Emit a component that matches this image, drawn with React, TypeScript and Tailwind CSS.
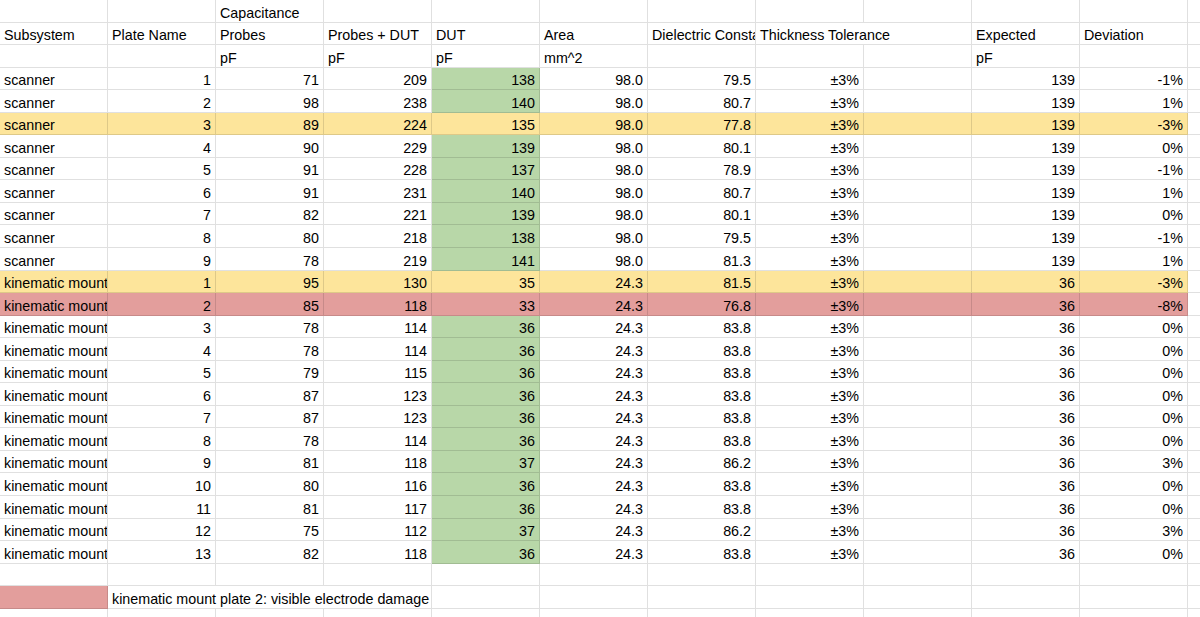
import React from "react";

type Row = {
  sub: string;
  plate: number;
  probes: number;
  both: number;
  dut: number;
  area: string;
  diel: string;
  expected: number;
  dev: string;
  tone?: "yellow" | "red";
};

const scanner: [number, number, number, number, string, number, string, ("yellow" | "red")?][] = [
  [1, 71, 209, 138, "79.5", 139, "-1%"],
  [2, 98, 238, 140, "80.7", 139, "1%"],
  [3, 89, 224, 135, "77.8", 139, "-3%", "yellow"],
  [4, 90, 229, 139, "80.1", 139, "0%"],
  [5, 91, 228, 137, "78.9", 139, "-1%"],
  [6, 91, 231, 140, "80.7", 139, "1%"],
  [7, 82, 221, 139, "80.1", 139, "0%"],
  [8, 80, 218, 138, "79.5", 139, "-1%"],
  [9, 78, 219, 141, "81.3", 139, "1%"],
];

const mount: [number, number, number, number, string, number, string, ("yellow" | "red")?][] = [
  [1, 95, 130, 35, "81.5", 36, "-3%", "yellow"],
  [2, 85, 118, 33, "76.8", 36, "-8%", "red"],
  [3, 78, 114, 36, "83.8", 36, "0%"],
  [4, 78, 114, 36, "83.8", 36, "0%"],
  [5, 79, 115, 36, "83.8", 36, "0%"],
  [6, 87, 123, 36, "83.8", 36, "0%"],
  [7, 87, 123, 36, "83.8", 36, "0%"],
  [8, 78, 114, 36, "83.8", 36, "0%"],
  [9, 81, 118, 37, "86.2", 36, "3%"],
  [10, 80, 116, 36, "83.8", 36, "0%"],
  [11, 81, 117, 36, "83.8", 36, "0%"],
  [12, 75, 112, 37, "86.2", 36, "3%"],
  [13, 82, 118, 36, "83.8", 36, "0%"],
];

const rows: Row[] = [
  ...scanner.map(([plate, probes, both, dut, diel, expected, dev, tone]) => ({
    sub: "scanner", plate, probes, both, dut, area: "98.0", diel, expected, dev, tone,
  })),
  ...mount.map(([plate, probes, both, dut, diel, expected, dev, tone]) => ({
    sub: "kinematic mount", plate, probes, both, dut, area: "24.3", diel, expected, dev, tone,
  })),
];

const Cell = ({
  children,
  right,
  wide,
  className = "",
}: {
  children?: React.ReactNode;
  right?: boolean;
  wide?: "2" | "3";
  className?: string;
}) => (
  <div
    className={`${wide === "2" ? "w-[216px]" : wide === "3" ? "w-[324px]" : "w-[108px]"} shrink-0 h-full flex items-end pb-[1px] px-[4px] overflow-hidden whitespace-nowrap leading-[16px] border-r border-b border-black/[0.12] ${
      right ? "justify-end" : ""
    } ${className}`}
  >
    {children}
  </div>
);

const Line = ({ children, bg = "" }: { children?: React.ReactNode; bg?: string }) => (
  <div className="flex h-[22.55px]">
    <div className={`flex h-full ${bg}`}>{children}</div>
    <div className="flex-1 h-full border-b border-black/[0.12]" />
  </div>
);

const Blank = ({ n }: { n: number }) => (
  <>
    {Array.from({ length: n }).map((_, i) => (
      <Cell key={i} />
    ))}
  </>
);

export default function App() {
  return (
    <div className="w-[1200px] h-[617px] overflow-hidden bg-white text-black text-[14.3px] font-['Liberation_Sans',Arial,sans-serif]">
      <Line>
        <Blank n={2} />
        <Cell>Capacitance</Cell>
        <Blank n={8} />
      </Line>
      <Line>
        <Cell>Subsystem</Cell>
        <Cell>Plate Name</Cell>
        <Cell>Probes</Cell>
        <Cell>Probes + DUT</Cell>
        <Cell>DUT</Cell>
        <Cell>Area</Cell>
        <Cell>Dielectric Constant</Cell>
        <Cell wide="2">Thickness Tolerance</Cell>
        <Cell>Expected</Cell>
        <Cell>Deviation</Cell>
      </Line>
      <Line>
        <Blank n={2} />
        <Cell>pF</Cell>
        <Cell>pF</Cell>
        <Cell>pF</Cell>
        <Cell>mm^2</Cell>
        <Blank n={3} />
        <Cell>pF</Cell>
        <Cell />
      </Line>
      {rows.map((r, i) => (
        <Line
          key={i}
          bg={r.tone === "yellow" ? "bg-[#fde59b]" : r.tone === "red" ? "bg-[#e39e9c]" : ""}
        >
          <Cell>{r.sub}</Cell>
          <Cell right>{r.plate}</Cell>
          <Cell right>{r.probes}</Cell>
          <Cell right>{r.both}</Cell>
          <Cell right className={r.tone ? "" : "bg-[#b8d7a8]"}>
            {r.dut}
          </Cell>
          <Cell right>{r.area}</Cell>
          <Cell right>{r.diel}</Cell>
          <Cell right>±3%</Cell>
          <Cell />
          <Cell right>{r.expected}</Cell>
          <Cell right>{r.dev}</Cell>
        </Line>
      ))}
      <Line>
        <Blank n={11} />
      </Line>
      <Line>
        <Cell className="bg-[#e39e9c]" />
        <Cell wide="3">kinematic mount plate 2: visible electrode damage</Cell>
        <Blank n={7} />
      </Line>
      <Line>
        <Blank n={11} />
      </Line>
    </div>
  );
}
